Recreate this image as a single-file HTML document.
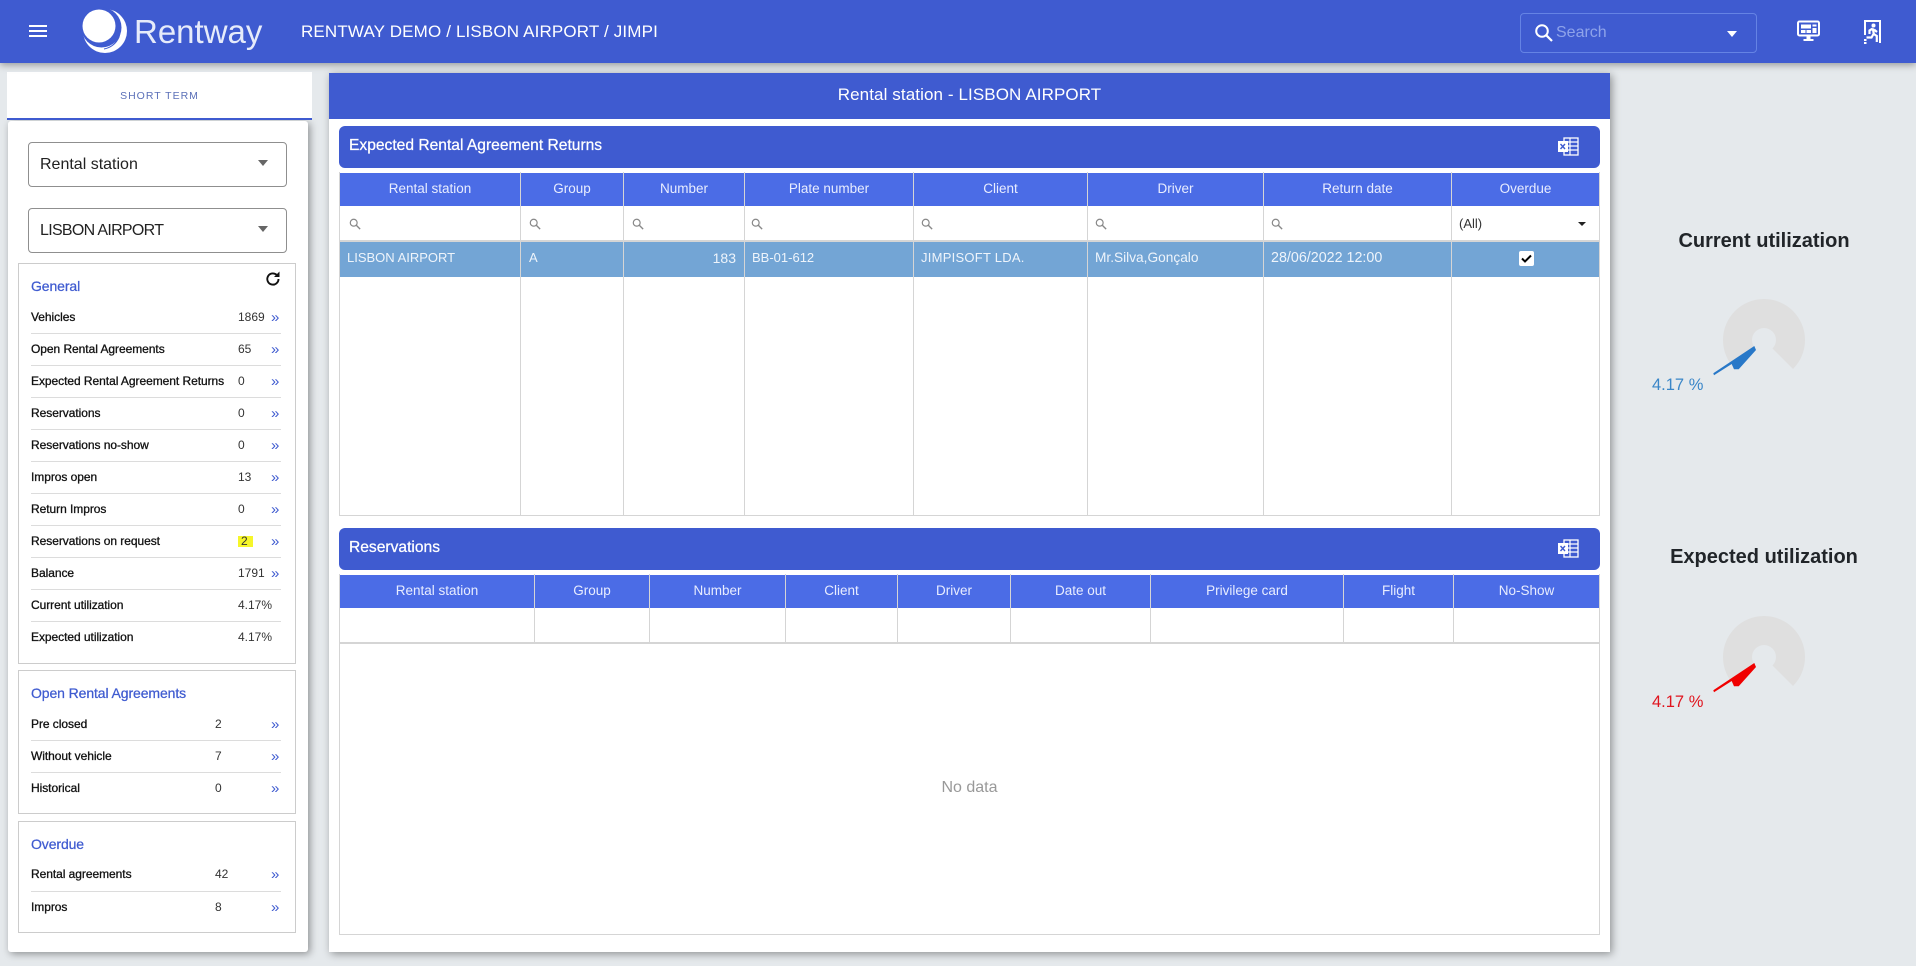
<!DOCTYPE html>
<html lang="en">
<head>
<meta charset="utf-8">
<title>Rentway</title>
<style>
html,body{margin:0;padding:0;width:1916px;height:966px;overflow:hidden;background:#e5e9ec;font-family:"Liberation Sans",sans-serif;}
div,span,svg{position:absolute;}
.t{white-space:nowrap;line-height:20px;height:20px;}
.hd{left:0;top:0;width:1916px;height:63px;background:#3f5bd0;box-shadow:0 2px 7px rgba(0,0,0,.35);z-index:5;}
.card{background:#fff;box-shadow:2px 2px 8px rgba(0,0,0,.38);}
.sel{left:28px;width:257px;height:43px;border:1px solid #8f8f8f;border-radius:4px;background:#fff;}
.arr{width:0;height:0;border-left:5.5px solid transparent;border-right:5.5px solid transparent;border-top:6px solid #666;}
.box{left:18px;width:276px;border:1px solid #ccc;background:#fff;}
.h{left:31px;font-size:14px;color:#3f5bd0;-webkit-text-stroke:.25px #3f5bd0;letter-spacing:-.1px;}
.l{left:31px;font-size:12px;color:#111;-webkit-text-stroke:.3px #111;letter-spacing:-.05px;}
.v{left:238px;font-size:12px;color:#333;}
.v2{left:215px;font-size:12px;color:#333;}
.c{left:271px;font-size:15px;color:#3f5bd0;margin-top:1px;}
.sp{left:31px;width:250px;height:1px;background:#dcdcdc;}
.bar{left:339px;width:1261px;height:42px;background:#3f5bd0;border-radius:6px;}
.bt{left:349px;font-size:15.6px;color:#fff;-webkit-text-stroke:.25px #fff;}
.th{height:33px;background:#4b6ce6;}
.ht{font-size:13.5px;color:#e8edff;text-align:center;}
.vl{width:1px;background:#d5d5d5;}
.hl{height:1px;background:#d5d5d5;}
.td{font-size:13px;color:#eef4fb;}
.q{width:12px;height:12px;}
</style>
</head>
<body>

<div class="hd">
  <div style="left:29px;top:25px;width:18px;height:2px;background:#fff;"></div>
  <div style="left:29px;top:30px;width:18px;height:2px;background:#fff;"></div>
  <div style="left:29px;top:35px;width:18px;height:2px;background:#fff;"></div>
  <svg style="left:80px;top:6px;" width="50" height="50" viewBox="0 0 50 50">
    <circle cx="25" cy="25" r="22" fill="#fff"/>
    <circle cx="21.500" cy="21.500" r="20" fill="#3f5bd0"/>
    <circle cx="19" cy="20" r="16.500" fill="#fff"/>
    <path d="M30 6.500C39 12 42 22 39 31C36 38 30 42 24 43" stroke="#3f5bd0" stroke-width="1.100" fill="none"/>
  </svg>
  <span class="t" style="left:134px;top:13px;height:38px;line-height:38px;font-size:33px;color:#e6ebfa;">Rentway</span>
  <span class="t" style="left:301px;top:22px;font-size:17px;color:#fff;letter-spacing:.15px;">RENTWAY DEMO / LISBON AIRPORT / JIMPI</span>
  <div style="left:1520px;top:13px;width:235px;height:38px;border:1px solid #6583e4;border-radius:4px;"></div>
  <svg style="left:1534px;top:23px;" width="20" height="20" viewBox="0 0 20 20"><circle cx="8" cy="8" r="5.800" stroke="#fff" stroke-width="2" fill="none"/><path d="M12.200 12.200L18 18" stroke="#fff" stroke-width="2.200"/></svg>
  <span class="t" style="left:1556px;top:23px;font-size:16px;color:#8ea3ea;">Search</span>
  <div class="arr" style="left:1727px;top:31px;border-top-color:#fff;"></div>
  <svg style="left:1797px;top:20px;" width="23" height="22" viewBox="0 0 23 22">
    <rect x="1" y="1.500" width="21" height="14" rx="1.500" stroke="#fff" stroke-width="2" fill="none"/>
    <rect x="4" y="4.500" width="10" height="4" fill="#fff"/><rect x="4" y="10" width="4.500" height="3" fill="#fff"/><rect x="9.500" y="10" width="4.500" height="3" fill="#fff"/><rect x="15.500" y="4.500" width="4" height="2" fill="#fff"/><rect x="15.500" y="8" width="4" height="5" fill="#fff"/>
    <rect x="9.500" y="16" width="4" height="3" fill="#fff"/><rect x="6.500" y="19" width="10" height="2" fill="#fff"/>
  </svg>
  <svg style="left:1863px;top:20px;" width="19" height="24" viewBox="0 0 19 24">
    <path d="M2 15V1h15v22" stroke="#fff" stroke-width="2" fill="none"/>
    <circle cx="10.500" cy="5.500" r="2" fill="#fff"/>
    <path d="M9.800 8.500L6.500 10.500v3.500M9.800 8.500l1 5.500 3 2v6M10.500 14l-2 3.500H3.500M11 9.500l3 2.500" stroke="#fff" stroke-width="2.200" fill="none"/>
    <rect x="1" y="19" width="2.500" height="2" fill="#fff"/><rect x="1" y="22" width="2.500" height="2" fill="#fff"/>
  </svg>
</div>

<!-- LEFT -->
<div class="card" style="left:8px;top:121px;width:300px;height:831px;border-radius:3px;"></div>
<div style="left:7px;top:72px;width:305px;height:46px;background:#fff;border-bottom:2px solid #3f5bd0;"></div>
<span class="t" style="left:60px;width:199px;text-align:center;top:86px;font-size:10.500px;letter-spacing:1px;color:#5b70b8;">SHORT TERM</span>

<div class="sel" style="top:142px;"></div>
<span class="t" style="left:40px;top:155px;font-size:16px;color:#222;">Rental station</span>
<div class="arr" style="left:258px;top:160px;"></div>
<div class="sel" style="top:208px;"></div>
<span class="t" style="left:40px;top:221px;font-size:16px;color:#222;letter-spacing:-.7px;">LISBON AIRPORT</span>
<div class="arr" style="left:258px;top:226px;"></div>

<div class="box" style="top:263px;height:399px;"></div>
<span class="t h" style="top:276px;">General</span>
<svg style="left:264px;top:270px;" width="18" height="18" viewBox="0 0 18 18"><path d="M14.500 9a5.600 5.600 0 1 1-1.700-4" stroke="#111" stroke-width="1.900" fill="none"/><path d="M15.500 1.500v5.500h-5.500z" fill="#111"/></svg>

<span class="t l" style="top:307px;">Vehicles</span><span class="t v" style="top:307px;">1869</span><span class="t c" style="top:307px;">»</span><div class="sp" style="top:333px;"></div>
<span class="t l" style="top:339px;">Open Rental Agreements</span><span class="t v" style="top:339px;">65</span><span class="t c" style="top:339px;">»</span><div class="sp" style="top:365px;"></div>
<span class="t l" style="top:371px;">Expected Rental Agreement Returns</span><span class="t v" style="top:371px;">0</span><span class="t c" style="top:371px;">»</span><div class="sp" style="top:397px;"></div>
<span class="t l" style="top:403px;">Reservations</span><span class="t v" style="top:403px;">0</span><span class="t c" style="top:403px;">»</span><div class="sp" style="top:429px;"></div>
<span class="t l" style="top:435px;">Reservations no-show</span><span class="t v" style="top:435px;">0</span><span class="t c" style="top:435px;">»</span><div class="sp" style="top:461px;"></div>
<span class="t l" style="top:467px;">Impros open</span><span class="t v" style="top:467px;">13</span><span class="t c" style="top:467px;">»</span><div class="sp" style="top:493px;"></div>
<span class="t l" style="top:499px;">Return Impros</span><span class="t v" style="top:499px;">0</span><span class="t c" style="top:499px;">»</span><div class="sp" style="top:525px;"></div>
<span class="t l" style="top:531px;">Reservations on request</span><div style="left:238px;top:536px;width:15px;height:11px;background:#f6f62a;"></div><span class="t v" style="top:531px;left:241px;">2</span><span class="t c" style="top:531px;">»</span><div class="sp" style="top:557px;"></div>
<span class="t l" style="top:563px;">Balance</span><span class="t v" style="top:563px;">1791</span><span class="t c" style="top:563px;">»</span><div class="sp" style="top:589px;"></div>
<span class="t l" style="top:595px;">Current utilization</span><span class="t v" style="top:595px;">4.17%</span><div class="sp" style="top:621px;"></div>
<span class="t l" style="top:627px;">Expected utilization</span><span class="t v" style="top:627px;">4.17%</span>

<div class="box" style="top:670px;height:142px;"></div>
<span class="t h" style="top:683px;">Open Rental Agreements</span>
<span class="t l" style="top:714px;">Pre closed</span><span class="t v2" style="top:714px;">2</span><span class="t c" style="top:714px;">»</span><div class="sp" style="top:740px;"></div>
<span class="t l" style="top:746px;">Without vehicle</span><span class="t v2" style="top:746px;">7</span><span class="t c" style="top:746px;">»</span><div class="sp" style="top:772px;"></div>
<span class="t l" style="top:778px;">Historical</span><span class="t v2" style="top:778px;">0</span><span class="t c" style="top:778px;">»</span>

<div class="box" style="top:821px;height:110px;"></div>
<span class="t h" style="top:834px;">Overdue</span>
<span class="t l" style="top:864px;">Rental agreements</span><span class="t v2" style="top:864px;">42</span><span class="t c" style="top:864px;">»</span><div class="sp" style="top:891px;"></div>
<span class="t l" style="top:897px;">Impros</span><span class="t v2" style="top:897px;">8</span><span class="t c" style="top:897px;">»</span>

<!-- MAIN -->
<div class="card" style="left:329px;top:73px;width:1281px;height:879px;"></div>
<div style="left:329px;top:73px;width:1281px;height:46px;background:#3f5bd0;"></div>
<span class="t" style="left:329px;width:1281px;text-align:center;top:85px;font-size:17px;color:#fff;letter-spacing:.1px;">Rental station - LISBON AIRPORT</span>

<div class="bar" style="top:126px;"></div>
<span class="t bt" style="top:136px;">Expected Rental Agreement Returns</span>
<svg style="left:1558px;top:137px;" width="21" height="19" viewBox="0 0 21 19">
  <rect x="6" y="1" width="14" height="17" fill="none" stroke="#fff" stroke-width="1.300"/>
  <path d="M6 5h14M6 9h14M6 13h14M12 1v17" stroke="#fff" stroke-width="1.200"/>
  <rect x="0" y="4" width="10" height="11" fill="#fff"/><path d="M2.500 7l4.500 5M7 7l-4.500 5" stroke="#3f5bd0" stroke-width="1.400"/>
</svg>

<!-- table 1 -->
<div class="th" style="left:340px;top:173px;width:1259px;"></div>
<div style="left:340px;top:242px;width:1259px;height:35px;background:#73a5d5;"></div>
<div style="left:340px;top:240px;width:1259px;height:2px;background:#d5d5d5;"></div>
<div class="hl" style="left:340px;top:515px;width:1260px;"></div>
<div class="vl" style="left:339px;top:172px;height:344px;"></div>
<div class="vl" style="left:1599px;top:172px;height:344px;"></div>
<div class="vl" style="left:520px;top:172px;height:344px;"></div>
<div class="vl" style="left:623px;top:172px;height:344px;"></div>
<div class="vl" style="left:744px;top:172px;height:344px;"></div>
<div class="vl" style="left:913px;top:172px;height:344px;"></div>
<div class="vl" style="left:1087px;top:172px;height:344px;"></div>
<div class="vl" style="left:1263px;top:172px;height:344px;"></div>
<div class="vl" style="left:1451px;top:172px;height:344px;"></div>

<span class="t ht" style="left:340px;width:180px;top:179px;">Rental station</span>
<span class="t ht" style="left:521px;width:102px;top:179px;">Group</span>
<span class="t ht" style="left:624px;width:120px;top:179px;">Number</span>
<span class="t ht" style="left:745px;width:168px;top:179px;">Plate number</span>
<span class="t ht" style="left:914px;width:173px;top:179px;">Client</span>
<span class="t ht" style="left:1088px;width:175px;top:179px;">Driver</span>
<span class="t ht" style="left:1264px;width:187px;top:179px;">Return date</span>
<span class="t ht" style="left:1452px;width:147px;top:179px;">Overdue</span>

<svg class="q" style="left:349px;top:218px;" viewBox="0 0 14 14"><circle cx="5.500" cy="5.500" r="4" stroke="#888" stroke-width="1.400" fill="none"/><path d="M8.500 8.500L13 13" stroke="#888" stroke-width="1.600"/></svg>
<svg class="q" style="left:529px;top:218px;" viewBox="0 0 14 14"><circle cx="5.500" cy="5.500" r="4" stroke="#888" stroke-width="1.400" fill="none"/><path d="M8.500 8.500L13 13" stroke="#888" stroke-width="1.600"/></svg>
<svg class="q" style="left:632px;top:218px;" viewBox="0 0 14 14"><circle cx="5.500" cy="5.500" r="4" stroke="#888" stroke-width="1.400" fill="none"/><path d="M8.500 8.500L13 13" stroke="#888" stroke-width="1.600"/></svg>
<svg class="q" style="left:751px;top:218px;" viewBox="0 0 14 14"><circle cx="5.500" cy="5.500" r="4" stroke="#888" stroke-width="1.400" fill="none"/><path d="M8.500 8.500L13 13" stroke="#888" stroke-width="1.600"/></svg>
<svg class="q" style="left:921px;top:218px;" viewBox="0 0 14 14"><circle cx="5.500" cy="5.500" r="4" stroke="#888" stroke-width="1.400" fill="none"/><path d="M8.500 8.500L13 13" stroke="#888" stroke-width="1.600"/></svg>
<svg class="q" style="left:1095px;top:218px;" viewBox="0 0 14 14"><circle cx="5.500" cy="5.500" r="4" stroke="#888" stroke-width="1.400" fill="none"/><path d="M8.500 8.500L13 13" stroke="#888" stroke-width="1.600"/></svg>
<svg class="q" style="left:1271px;top:218px;" viewBox="0 0 14 14"><circle cx="5.500" cy="5.500" r="4" stroke="#888" stroke-width="1.400" fill="none"/><path d="M8.500 8.500L13 13" stroke="#888" stroke-width="1.600"/></svg>
<span class="t" style="left:1459px;top:214px;font-size:13px;color:#333;">(All)</span>
<div class="arr" style="left:1578px;top:222px;border-left-width:4px;border-right-width:4px;border-top:4px solid #222;"></div>

<span class="t td" style="left:347px;top:248px;">LISBON AIRPORT</span>
<span class="t td" style="left:529px;top:248px;">A</span>
<span class="t td" style="left:624px;width:112px;text-align:right;top:248px;font-size:14px;">183</span>
<span class="t td" style="left:752px;top:248px;">BB-01-612</span>
<span class="t td" style="left:921px;top:248px;letter-spacing:.25px;">JIMPISOFT LDA.</span>
<span class="t td" style="left:1095px;top:248px;font-size:13.700px;">Mr.Silva,Gonçalo</span>
<span class="t td" style="left:1271px;top:248px;font-size:14.300px;">28/06/2022 12:00</span>
<div style="left:1519px;top:251px;width:15px;height:15px;background:#fff;border-radius:2px;"></div>
<svg style="left:1519px;top:251px;" width="15" height="15" viewBox="0 0 15 15"><path d="M3 7.500l3 3 6-6" stroke="#000" stroke-width="2" fill="none"/></svg>

<!-- table 2 -->
<div class="bar" style="top:528px;"></div>
<span class="t bt" style="top:538px;">Reservations</span>
<svg style="left:1558px;top:539px;" width="21" height="19" viewBox="0 0 21 19">
  <rect x="6" y="1" width="14" height="17" fill="none" stroke="#fff" stroke-width="1.300"/>
  <path d="M6 5h14M6 9h14M6 13h14M12 1v17" stroke="#fff" stroke-width="1.200"/>
  <rect x="0" y="4" width="10" height="11" fill="#fff"/><path d="M2.500 7l4.500 5M7 7l-4.500 5" stroke="#3f5bd0" stroke-width="1.400"/>
</svg>

<div class="th" style="left:340px;top:575px;width:1259px;"></div>
<div style="left:340px;top:642px;width:1259px;height:2px;background:#d5d5d5;"></div>
<div class="hl" style="left:340px;top:934px;width:1260px;"></div>
<div class="vl" style="left:339px;top:574px;height:361px;"></div>
<div class="vl" style="left:1599px;top:574px;height:361px;"></div>
<div class="vl" style="left:534px;top:574px;height:69px;"></div>
<div class="vl" style="left:649px;top:574px;height:69px;"></div>
<div class="vl" style="left:785px;top:574px;height:69px;"></div>
<div class="vl" style="left:897px;top:574px;height:69px;"></div>
<div class="vl" style="left:1010px;top:574px;height:69px;"></div>
<div class="vl" style="left:1150px;top:574px;height:69px;"></div>
<div class="vl" style="left:1343px;top:574px;height:69px;"></div>
<div class="vl" style="left:1453px;top:574px;height:69px;"></div>

<span class="t ht" style="left:340px;width:194px;top:581px;">Rental station</span>
<span class="t ht" style="left:535px;width:114px;top:581px;">Group</span>
<span class="t ht" style="left:650px;width:135px;top:581px;">Number</span>
<span class="t ht" style="left:786px;width:111px;top:581px;">Client</span>
<span class="t ht" style="left:898px;width:112px;top:581px;">Driver</span>
<span class="t ht" style="left:1011px;width:139px;top:581px;">Date out</span>
<span class="t ht" style="left:1151px;width:192px;top:581px;">Privilege card</span>
<span class="t ht" style="left:1344px;width:109px;top:581px;">Flight</span>
<span class="t ht" style="left:1454px;width:145px;top:581px;">No-Show</span>

<span class="t" style="left:340px;width:1259px;text-align:center;top:778px;font-size:16px;color:#999;">No data</span>

<!-- RIGHT -->
<span class="t" style="left:1621px;width:286px;text-align:center;top:231px;font-size:20px;font-weight:bold;color:#212529;">Current utilization</span>
<svg style="left:1700px;top:280px;" width="130" height="110" viewBox="1700 280 130 110">
  <path d="M1735 369A41 41 0 1 1 1793 369L1772.500 348.500A12 12 0 1 0 1755.500 348.500Z" fill="#dfdfdf"/>
  <polygon points="1713.300,373.300 1754.300,346 1756,350 1738.700,369.300 1734,369.300 1731.700,364 1714,375.300" fill="#2878c8"/>
</svg>
<span class="t" style="left:1652px;top:375px;font-size:16.500px;color:#3a86c8;">4.17 %</span>

<span class="t" style="left:1621px;width:286px;text-align:center;top:547px;font-size:20px;font-weight:bold;color:#212529;">Expected utilization</span>
<svg style="left:1700px;top:597px;" width="130" height="110" viewBox="1700 597 130 110">
  <path d="M1735 686A41 41 0 1 1 1793 686L1772.500 665.500A12 12 0 1 0 1755.500 665.500Z" fill="#dfdfdf"/>
  <polygon points="1713.300,690.300 1754.300,663 1756,667 1738.700,686.300 1734,686.300 1731.700,681 1714,692.300" fill="#f00000"/>
</svg>
<span class="t" style="left:1652px;top:692px;font-size:16.500px;color:#e0141e;">4.17 %</span>

</body>
</html>
